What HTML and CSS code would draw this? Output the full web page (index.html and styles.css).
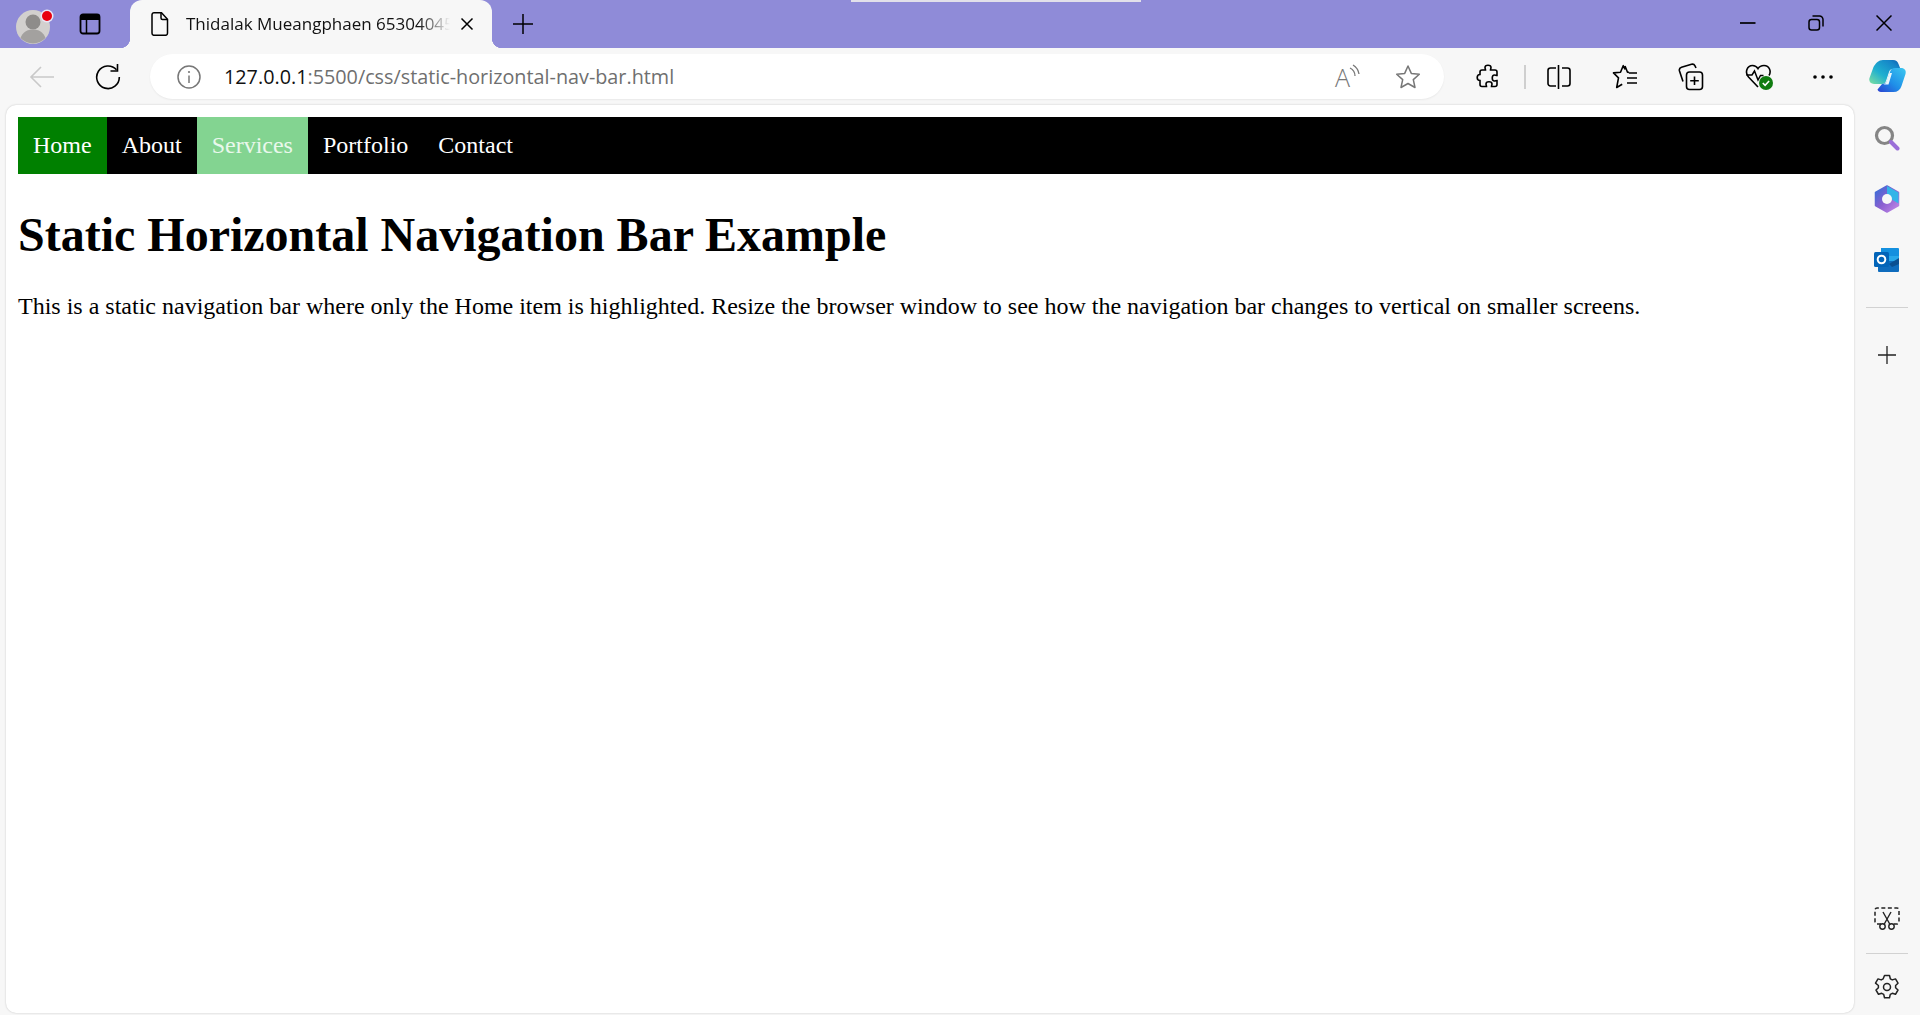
FILE: index.html
```html
<!DOCTYPE html>
<html lang="en">
<head>
  <meta charset="UTF-8">
  <title>Static Horizontal Navigation Bar</title>
  <link rel="stylesheet" href="styles.css">
</head>
<body>
  <div class="title-stripe"></div>

  <!-- tab strip -->
  <header class="tabstrip">
    <div class="slot avatar-slot">
      <svg width="40" height="40" viewBox="0 0 40 40">
        <circle cx="17" cy="23" r="17" fill="#d2d0ce"/>
        <circle cx="17" cy="18" r="7.500" fill="#8e8c8a"/>
        <path d="M4.500 34c2-6 7-8.500 12.500-8.500s10.500 2.500 12.500 8.500a17 17 0 0 1-25 0z" fill="#a3a19f"/>
        <circle cx="31" cy="12" r="6.500" fill="#e9e7f6"/>
        <circle cx="31" cy="12" r="5" fill="#e8000f"/>
      </svg>
    </div>
    <div class="slot workspace-slot">
      <svg width="24" height="24" viewBox="0 0 24 24">
        <rect x="2.500" y="2.500" width="19" height="19" rx="2.500" fill="none" stroke="#000" stroke-width="1.800"/>
        <path d="M2.500 5a2.500 2.500 0 0 1 2.500-2.500h14a2.500 2.500 0 0 1 2.500 2.500v3h-19z" fill="#000"/>
        <path d="M8.500 8v13" stroke="#000" stroke-width="1.500"/>
      </svg>
    </div>
    <div class="tab">
      <svg class="tab-icon" width="24" height="24" viewBox="0 0 24 24">
        <path d="M6 .8h7.500l6 6.500v14a2 2 0 0 1-2 2H6a2 2 0 0 1-2-2v-18.500a2 2 0 0 1 2-2z" fill="none" stroke="#000" stroke-width="1.500"/>
        <path d="M13 1v5a1.500 1.500 0 0 0 1.500 1.500H19" fill="none" stroke="#000" stroke-width="1.500"/>
      </svg>
      <span class="tab-title">Thidalak Mueangphaen 65304045</span>
      <svg class="tab-close" width="14" height="14" viewBox="0 0 14 14">
        <path d="M1.500 1.500l11 11M12.500 1.500l-11 11" stroke="#000" stroke-width="1.500"/>
      </svg>
    </div>
    <div class="slot newtab-slot">
      <svg width="22" height="22" viewBox="0 0 22 22">
        <path d="M11 1v20M1 11h20" stroke="#000" stroke-width="1.500"/>
      </svg>
    </div>
    <div class="window-controls">
      <div class="slot win-slot">
        <svg width="16" height="16" viewBox="0 0 16 16"><path d="M0 8h15.500" stroke="#000" stroke-width="1.700"/></svg>
      </div>
      <div class="slot win-slot">
        <svg width="16" height="16" viewBox="0 0 16 16">
          <rect x="1" y="4.500" width="10.500" height="10.500" rx="2.500" fill="none" stroke="#000" stroke-width="1.500"/>
          <path d="M4.500 1h7a3.500 3.500 0 0 1 3.500 3.500v7" fill="none" stroke="#000" stroke-width="1.500"/>
        </svg>
      </div>
      <div class="slot win-slot">
        <svg width="16" height="16" viewBox="0 0 16 16"><path d="M.5.500l15 15M15.500.500l-15 15" stroke="#000" stroke-width="1.500"/></svg>
      </div>
    </div>
  </header>

  <!-- toolbar -->
  <div class="toolbar">
    <div class="slot tool-slot">
      <svg width="26" height="24" viewBox="0 0 26 24">
        <path d="M25 12H2M12 2L2 12l10 10" fill="none" stroke="#c9c9c9" stroke-width="1.600"/>
      </svg>
    </div>
    <div class="slot tool-slot">
      <svg width="26" height="26" viewBox="0 0 26 26">
        <path d="M21.500 5.800A11.300 11.300 0 1 0 24.300 13" fill="none" stroke="#000" stroke-width="1.600"/>
        <path d="M22.500 0v7h-7" fill="none" stroke="#000" stroke-width="1.600"/>
      </svg>
    </div>
    <div class="address">
      <svg class="info-icon" width="24" height="24" viewBox="0 0 24 24">
        <circle cx="12" cy="12" r="11" fill="none" stroke="#777" stroke-width="1.500"/>
        <path d="M12 10.500V18" stroke="#777" stroke-width="1.500"/>
        <circle cx="12" cy="7" r="1.100" fill="#777"/>
      </svg>
      <span class="url"><span class="url-host">127.0.0.1</span>:5500/css/static-horizontal-nav-bar.html</span>
      <div class="address-actions">
        <div class="slot addr-slot">
          <svg width="28" height="40" viewBox="0 0 28 40">
            <text x="1" y="30" class="read-letter">A</text>
            <path d="M16 11a9 9 0 0 1 5 8M19 8a13 13 0 0 1 6 9" fill="none" stroke="#777" stroke-width="1.300"/>
          </svg>
        </div>
        <div class="slot addr-slot">
          <svg width="26" height="26" viewBox="0 0 26 26">
            <path d="M13 2l3.300 7.400 8 .8-6 5.400 1.700 7.900-7-4-7 4 1.700-7.900-6-5.400 8-.8z" fill="none" stroke="#777" stroke-width="1.500" stroke-linejoin="round"/>
          </svg>
        </div>
      </div>
    </div>
    <div class="toolbar-actions">
      <div class="slot tool-slot">
        <svg width="24" height="26" viewBox="0 0 24 26">
          <path d="M9 3.500c0-3 6-3 6 0 0 1-.5 1.500-.5 2.500h4.500a2 2 0 0 1 2 2v3.500c-1 0-1.500-.5-2.500-.5-3 0-3 6 0 6 1 0 1.500-.5 2.500-.5v4a2 2 0 0 1-2 2h-3.500c0-1 .5-1.500.5-2.500 0-3-6-3-6 0 0 1 .5 1.500.5 2.500H6a2 2 0 0 1-2-2v-4c-1 0-2.800-.3-2.800-3s1.800-3 2.800-3V8a2 2 0 0 1 2-2h3.500C9.500 5 9 4.500 9 3.500z" fill="none" stroke="#000" stroke-width="1.600"/>
        </svg>
      </div>
      <div class="toolbar-sep"></div>
      <div class="slot tool-slot">
        <svg width="24" height="26" viewBox="0 0 24 26">
          <path d="M9 4H3.500A2.500 2.500 0 0 0 1 6.500v13A2.500 2.500 0 0 0 3.500 22H9M15 4h5.500A2.500 2.500 0 0 1 23 6.500v13a2.500 2.500 0 0 1-2.500 2.500H15" fill="none" stroke="#000" stroke-width="1.600"/>
          <path d="M11.500 1v24" stroke="#000" stroke-width="1.600"/>
        </svg>
      </div>
      <div class="slot tool-slot">
        <svg width="26" height="26" viewBox="0 0 26 26">
          <path d="M13 5.500l-1.800-3.800-2.700 6.500-7 .7 5 5-1.800 9.600 5.500-3.300M13 2l2.500 6.200 1.500.2" fill="none" stroke="#000" stroke-width="1.600" stroke-linejoin="round"/>
          <path d="M17 9h8M15 14h10M15 19h10" stroke="#000" stroke-width="1.600"/>
        </svg>
      </div>
      <div class="slot tool-slot">
        <svg width="26" height="28" viewBox="0 0 26 28">
          <path d="M5 18.500L1.500 8a3 3 0 0 1 2-3.700l10-3a3 3 0 0 1 3.500 1.500l1 2.200" fill="none" stroke="#000" stroke-width="1.600"/>
          <rect x="8.500" y="9" width="16" height="17.500" rx="3" fill="#f7f7f7" stroke="#000" stroke-width="1.600"/>
          <path d="M16.500 13.500v8.500M12.200 17.800h8.600" stroke="#000" stroke-width="1.600"/>
        </svg>
      </div>
      <div class="slot tool-slot heart-slot">
        <svg width="30" height="30" viewBox="0 0 30 30">
          <path d="M13 25L3.500 15C-.500 10.500 2 3.500 7.500 3.500c3 0 4.500 1.500 5.500 3.200 1-1.700 3-3.200 6-3.200 5.500 0 7.500 6 5 10" fill="none" stroke="#000" stroke-width="1.600"/>
          <path d="M1.500 13h5.500l2.500-4 3.500 9 2.500-4.500h3" fill="none" stroke="#000" stroke-width="1.500"/>
          <circle cx="21" cy="21" r="7" fill="#107c10"/>
          <path d="M17.800 21l2.300 2.300 4-4.300" fill="none" stroke="#fff" stroke-width="1.600"/>
        </svg>
      </div>
      <div class="slot tool-slot">
        <svg width="22" height="6" viewBox="0 0 22 6">
          <circle cx="3" cy="3" r="1.800" fill="#000"/>
          <circle cx="11" cy="3" r="1.800" fill="#000"/>
          <circle cx="19" cy="3" r="1.800" fill="#000"/>
        </svg>
      </div>
      <div class="slot copilot-slot">
        <svg width="38" height="33" viewBox="0 0 38 33">
          <defs>
            <linearGradient id="copilotA" x1="0" y1="1" x2="1" y2="0">
              <stop offset="0" stop-color="#7fe0a0"/>
              <stop offset=".4" stop-color="#1fb0d0"/>
              <stop offset=".8" stop-color="#1585c8"/>
              <stop offset="1" stop-color="#0b5cad"/>
            </linearGradient>
            <linearGradient id="copilotB" x1="0" y1="1" x2="1" y2="0">
              <stop offset="0" stop-color="#2a40d0"/>
              <stop offset=".45" stop-color="#1f8fe8"/>
              <stop offset="1" stop-color="#3cc8f0"/>
            </linearGradient>
          </defs>
          <path d="M14 0h10c3 0 4.500 1.500 5.500 4l2 5H24c-2 0-3.500 1-4 3l-3 9c-.500 1.500-1.500 3-4 3H5c-3.500 0-5.500-3-4.500-6l4-11C7 3 9.500 0 14 0z" fill="url(#copilotA)"/>
          <path d="M26 8h6c3.500 0 5.500 2.500 4.500 6l-4 12c-1.500 4-4 6-8 6H12c-2 0-3-1-3.500-2.500L13 24c2.500 0 4-1 5-3l3-9c.7-2.500 2.500-4 5-4z" fill="url(#copilotB)"/>
          <path d="M20.500 13l-3 8.500c-.5 1.500-1.500 2.500-3 3h5l3.500-11.500z" fill="#eaf6fb"/>
        </svg>
      </div>
    </div>
  </div>

  <div class="workarea">
    <!-- the page itself -->
    <main class="page">
      <nav class="navbar">
        <ul>
          <li><a class="active" href="#">Home</a></li>
          <li><a href="#">About</a></li>
          <li><a class="hovered" href="#">Services</a></li>
          <li><a href="#">Portfolio</a></li>
          <li><a href="#">Contact</a></li>
        </ul>
      </nav>
      <h1>Static Horizontal Navigation Bar Example</h1>
      <p>This is a static navigation bar where only the Home item is highlighted. Resize the browser window to see how the navigation bar changes to vertical on smaller screens.</p>
    </main>

    <!-- edge sidebar -->
    <aside class="sidebar">
      <div class="slot side-slot">
        <svg width="26" height="26" viewBox="0 0 26 26">
          <circle cx="10.500" cy="10.500" r="8" fill="none" stroke="#858585" stroke-width="3.200"/>
          <path d="M17 17l6.500 6.500" stroke="#9a6fd8" stroke-width="4" stroke-linecap="round"/>
        </svg>
      </div>
      <div class="slot side-slot">
        <svg width="26" height="28" viewBox="0 0 26 28">
          <defs>
            <linearGradient id="m365" x1="0" y1="0" x2="1" y2="1">
              <stop offset="0" stop-color="#2f6fd8"/>
              <stop offset=".5" stop-color="#8a5fd0"/>
              <stop offset="1" stop-color="#c58ae8"/>
            </linearGradient>
          </defs>
          <path d="M13 1l11.500 6.500v13L13 27 1.500 20.500v-13z" fill="url(#m365)" stroke="url(#m365)" stroke-width="1.500" stroke-linejoin="round"/>
          <path d="M13 1l11.500 6.500v11L17 14c0-2-2-4-4-4z" fill="#33b4e8"/>
          <circle cx="13" cy="14" r="5" fill="#f7f7f7"/>
        </svg>
      </div>
      <div class="slot side-slot">
        <svg width="26" height="26" viewBox="0 0 26 26">
          <path d="M7 1h17a1 1 0 0 1 1 1v10H7z" fill="#1490df"/>
          <rect x="4" y="9" width="21" height="8" fill="#28a8ea"/>
          <path d="M4 14h21v10a1 1 0 0 1-1 1H5a1 1 0 0 1-1-1z" fill="#0f6cbd"/>
          <path d="M15 17l10-6v6l-7 3z" fill="#0a4f91"/>
          <rect x="0" y="5" width="15" height="15" rx="1.500" fill="#0364b8"/>
          <circle cx="7.500" cy="12.500" r="3.800" fill="none" stroke="#fff" stroke-width="2"/>
        </svg>
      </div>
      <div class="side-sep first-sep"></div>
      <div class="slot side-slot add-slot">
        <svg width="20" height="20" viewBox="0 0 20 20">
          <path d="M10 1v18M1 10h18" stroke="#222" stroke-width="1.300"/>
        </svg>
      </div>
      <div class="side-bottom">
        <div class="slot side-slot screenshot-slot">
          <svg width="26" height="24" viewBox="0 0 26 24">
            <path d="M7 17H3a2 2 0 0 1-2-2V3a2 2 0 0 1 2-2h20a2 2 0 0 1 2 2v12a2 2 0 0 1-2 2h-4" fill="none" stroke="#222" stroke-width="1.500" stroke-dasharray="4 2.500"/>
            <circle cx="8.500" cy="19.500" r="2.700" fill="none" stroke="#222" stroke-width="1.400"/>
            <circle cx="17.500" cy="19.500" r="2.700" fill="none" stroke="#222" stroke-width="1.400"/>
            <path d="M10 17.500L17 5M16 17.500L9 5" stroke="#222" stroke-width="1.400"/>
          </svg>
        </div>
        <div class="side-sep"></div>
        <div class="slot side-slot gear-slot">
          <svg width="26" height="26" viewBox="0 0 26 26">
            <path d="M10.500 1.500h5l.8 3.300 2 1.100 3.200-1 2.500 4.300-2.400 2.300v2.200l2.400 2.300-2.500 4.300-3.200-1-2 1.100-.8 3.300h-5l-.8-3.300-2-1.100-3.200 1-2.500-4.300 2.400-2.300v-2.200L1.500 9.200 4 4.900l3.200 1 2 -1.100z" fill="none" stroke="#222" stroke-width="1.500" stroke-linejoin="round"/>
            <circle cx="13" cy="13" r="3.500" fill="none" stroke="#222" stroke-width="1.500"/>
          </svg>
        </div>
      </div>
    </aside>
  </div>
</body>
</html>
```

FILE: styles.css
```css
* {
  box-sizing: border-box;
}

html, body {
  height: 100%;
}

body {
  margin: 0;
  display: flex;
  flex-direction: column;
  height: 1015px;
  overflow: hidden;
  background: #f7f7f7;
  font-family: "Open Sans", "Noto Sans", sans-serif;
}

.slot {
  display: flex;
  align-items: center;
  justify-content: center;
  flex-shrink: 0;
}

/* thin light bar at the top of the window */
.title-stripe {
  position: absolute;
  top: 0;
  left: 851px;
  width: 290px;
  height: 2px;
  background: #e2e0ea;
}

.tabstrip {
  display: flex;
  height: 48px;
  background: #8f8bd8;
  flex-shrink: 0;
}

.avatar-slot {
  width: 66px;
  height: 48px;
  padding-left: 6px;
}

.workspace-slot {
  width: 48px;
  height: 48px;
}

.tab {
  position: relative;
  display: flex;
  align-items: center;
  width: 362px;
  height: 48px;
  margin-left: 16px;
  padding-left: 18px;
  background: #f7f7f7;
  border-radius: 12px 12px 0 0;
}

/* flared corners at the foot of the tab */
.tab::before,
.tab::after {
  content: "";
  position: absolute;
  bottom: 0;
  width: 10px;
  height: 10px;
}

.tab::before {
  left: -10px;
  background: radial-gradient(circle at 0 0, transparent 10px, #f7f7f7 10.5px);
}

.tab::after {
  right: -10px;
  background: radial-gradient(circle at 100% 0, transparent 10px, #f7f7f7 10.5px);
}

.tab-icon {
  flex-shrink: 0;
  margin-right: 14px;
}

.tab-title {
  width: 264px;
  margin-bottom: 2px;
  white-space: nowrap;
  font-size: 17px;
  color: #111;
  -webkit-mask-image: linear-gradient(to right, #000 88%, transparent 100%);
  mask-image: linear-gradient(to right, #000 88%, transparent 100%);
}

.tab-close {
  flex-shrink: 0;
  margin-left: 10px;
}

.newtab-slot {
  width: 62px;
  height: 48px;
}

.window-controls {
  display: flex;
  margin-left: auto;
  padding-right: 2px;
}

.win-slot {
  width: 68px;
  height: 46px;
}

.toolbar {
  display: flex;
  align-items: center;
  height: 57px;
  padding-left: 9px;
  flex-shrink: 0;
}

.tool-slot {
  width: 66px;
  height: 45px;
}

.address {
  display: flex;
  align-items: center;
  flex: 1;
  height: 45px;
  margin-left: 9px;
  margin-right: 11px;
  padding-left: 27px;
  padding-right: 6px;
  background: #fff;
  border-radius: 23px;
  box-shadow: 0 1px 2px rgba(0,0,0,0.06);
}

.info-icon {
  flex-shrink: 0;
  margin-right: 23px;
}

.url {
  font-size: 19.8px;
  color: #6f6f6f;
  white-space: nowrap;
}

.url-host {
  color: #111;
}

.address-actions {
  display: flex;
  margin-left: auto;
}

.addr-slot {
  width: 60px;
  height: 45px;
}

.read-letter {
  font-family: "Open Sans", sans-serif;
  font-size: 25px;
  font-weight: 300;
  fill: #777;
}

.toolbar-actions {
  display: flex;
  align-items: center;
  width: 465px;
  flex-shrink: 0;
}

.toolbar-sep {
  width: 2px;
  height: 24px;
  margin-left: 3px;
  background: #cfcfcf;
  flex-shrink: 0;
}

.heart-slot {
  padding-left: 6px;
}

.copilot-slot {
  width: 63px;
  height: 45px;
}

.workarea {
  display: flex;
  flex: 1;
  min-height: 0;
}

.page {
  flex: 1;
  margin-left: 6px;
  margin-bottom: 2px;
  padding: 12px;
  background: #fff;
  border-radius: 10px;
  box-shadow: 0 0 2px rgba(0,0,0,0.22);
  font-family: "Liberation Serif", "Times New Roman", serif;
  font-size: 24px;
  color: #000;
}

.navbar ul {
  display: flex;
  margin: 0;
  padding: 0;
  list-style: none;
  background: #000;
}

.navbar a {
  display: block;
  padding: 15px;
  color: #fff;
  text-decoration: none;
}

.navbar a.active {
  background: #008000;
}

.navbar a.hovered {
  background: #83d491;
  color: #e9f8ec;
}

h1 {
  margin: 33px 0 31px;
  font-size: 48px;
  font-weight: bold;
}

p {
  margin: 24px 0;
}

.sidebar {
  display: flex;
  flex-direction: column;
  align-items: center;
  width: 66px;
  padding-top: 2px;
  flex-shrink: 0;
}

.side-slot {
  width: 66px;
  height: 61px;
}

.side-sep {
  width: 42px;
  height: 1px;
  background: #d2d2d2;
  flex-shrink: 0;
}

.first-sep {
  margin-top: 17px;
}

.add-slot {
  margin-top: 16px;
}

.side-bottom {
  display: flex;
  flex-direction: column;
  align-items: center;
  margin-top: auto;
}

.screenshot-slot {
  height: 56px;
  margin-bottom: 6px;
}

.gear-slot {
  height: 56px;
  margin-top: 5px;
}
```
